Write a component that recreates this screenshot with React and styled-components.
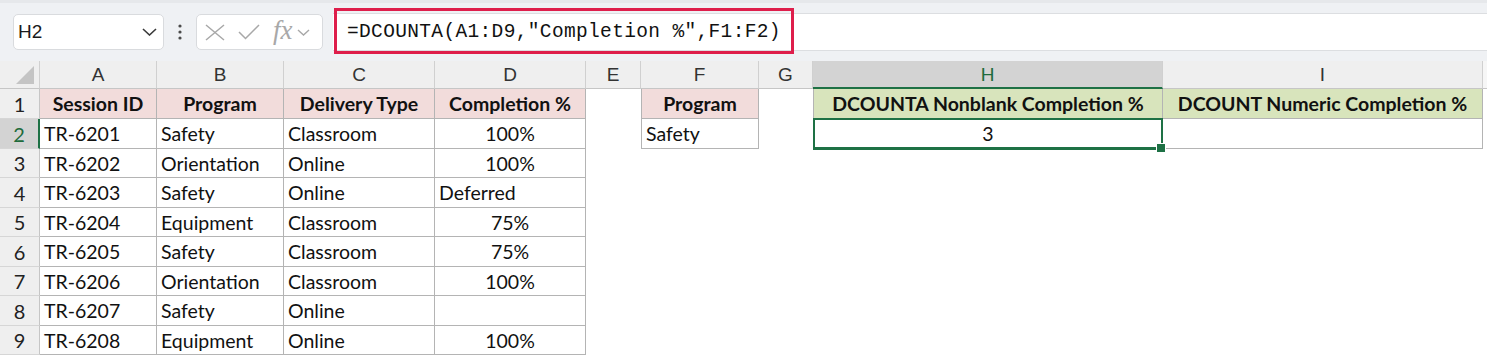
import styled, { createGlobalStyle } from "styled-components"

const GlobalStyle = createGlobalStyle`
  body {
    margin: 0;
    background: #ffffff;
    font-family: 'Lato', sans-serif;
    overflow: hidden;
  }
`

const COL_WIDTHS = [40, 117, 127, 151, 151, 55, 118, 54, 350, 320]
const ROW_HEIGHTS = [30, 30, 29, 30, 29, 30, 29, 30, 29]
const LETTERS = ["A", "B", "C", "D", "E", "F", "G", "H", "I"]

const PINK = "#f2dcdb"
const GREEN = "#d8e4bc"

// each row: cells for A..I, null = empty cell without border
const ROWS = [
  [
    { v: "Session ID", fill: PINK, bold: true, align: "center" },
    { v: "Program", fill: PINK, bold: true, align: "center" },
    { v: "Delivery Type", fill: PINK, bold: true, align: "center" },
    { v: "Completion %", fill: PINK, bold: true, align: "center" },
    null,
    { v: "Program", fill: PINK, bold: true, align: "center", left: true },
    null,
    { v: "DCOUNTA Nonblank Completion %", fill: GREEN, bold: true, align: "center", left: true },
    { v: "DCOUNT Numeric Completion %", fill: GREEN, bold: true, align: "center" },
  ],
  [
    { v: "TR-6201" }, { v: "Safety" }, { v: "Classroom" }, { v: "100%", align: "center" },
    null,
    { v: "Safety", left: true },
    null,
    { v: "3", align: "center", left: true, selected: true },
    { v: "" },
  ],
  [{ v: "TR-6202" }, { v: "Orientation" }, { v: "Online" }, { v: "100%", align: "center" }],
  [{ v: "TR-6203" }, { v: "Safety" }, { v: "Online" }, { v: "Deferred" }],
  [{ v: "TR-6204" }, { v: "Equipment" }, { v: "Classroom" }, { v: "75%", align: "center" }],
  [{ v: "TR-6205" }, { v: "Safety" }, { v: "Classroom" }, { v: "75%", align: "center" }],
  [{ v: "TR-6206" }, { v: "Orientation" }, { v: "Classroom" }, { v: "100%", align: "center" }],
  [{ v: "TR-6207" }, { v: "Safety" }, { v: "Online" }, { v: "" }],
  [{ v: "TR-6208" }, { v: "Equipment" }, { v: "Online" }, { v: "100%", align: "center" }],
]

export default function App() {
  return (
    <>
      <GlobalStyle />
      <Page>
        <Toolbar>
          <NameBox>
            <NameText>H2</NameText>
            <svg width="15" height="8" viewBox="0 0 15 8">
              <path d="M1 1 L7.5 7 L14 1" fill="none" stroke="#3a3a3a" strokeWidth="1.6" />
            </svg>
          </NameBox>
          <Dots width="4" height="16" viewBox="0 0 4 16">
            <circle cx="2" cy="2" r="1.6" fill="#4a4a4a" />
            <circle cx="2" cy="8" r="1.6" fill="#4a4a4a" />
            <circle cx="2" cy="14" r="1.6" fill="#4a4a4a" />
          </Dots>
          <FuncBox>
            <svg width="20" height="17" viewBox="0 0 20 17">
              <path d="M1 1 L19 16 M19 1 L1 16" stroke="#a8a8a8" strokeWidth="1.5" fill="none" />
            </svg>
            <svg width="22" height="16" viewBox="0 0 22 16">
              <path d="M1 8 L7.5 14.5 L21 1" stroke="#a8a8a8" strokeWidth="1.5" fill="none" />
            </svg>
            <FxLabel>fx</FxLabel>
            <svg width="13" height="7" viewBox="0 0 13 7">
              <path d="M1 1 L6.5 6 L12 1" fill="none" stroke="#a8a8a8" strokeWidth="1.4" />
            </svg>
          </FuncBox>
          <FormulaBar>
            <FormulaText>=DCOUNTA(A1:D9,"Completion %",F1:F2)</FormulaText>
            <Highlight />
          </FormulaBar>
        </Toolbar>

        <Sheet>
          <Corner>
            <svg width="20" height="20" viewBox="0 0 20 20">
              <polygon points="19,1 19,19 1,19" fill="#c4c4c4" />
            </svg>
          </Corner>
          {LETTERS.map((l) => (
            <ColHeader key={l} $active={l === "H"}>{l}</ColHeader>
          ))}
          <ColFiller />

          {ROWS.map((row, r) => (
            <Row key={r} row={row} index={r} />
          ))}
        </Sheet>
      </Page>
    </>
  )
}

function Row({ row, index }) {
  const cells = []
  for (let c = 0; c < 9; c++) {
    const cell = row[c]
    if (!cell) {
      cells.push(<Cell key={c} />)
      continue
    }
    cells.push(
      <Cell
        key={c}
        $border
        $left={cell.left}
        $fill={cell.fill}
        $bold={cell.bold}
        $align={cell.align}
      >
        {cell.v}
        {cell.selected && (
          <Selection>
            <Handle />
          </Selection>
        )}
      </Cell>
    )
  }
  return (
    <>
      <RowHeader $active={index === 1}>{index + 1}</RowHeader>
      {cells}
      <Cell />
    </>
  )
}

const Page = styled.div`
  width: 1487px;
  height: 357px;
  overflow: hidden;
  background: #ffffff;
`

const Toolbar = styled.div`
  height: 61px;
  box-sizing: border-box;
  background: #eff1f4;
  border-top: 3px solid #e6e8eb;
  display: flex;
  align-items: center;
  padding-left: 13px;
`

const NameBox = styled.div`
  width: 151px;
  height: 36px;
  box-sizing: border-box;
  background: #ffffff;
  border: 1px solid #d9dbde;
  border-radius: 5px;
  display: flex;
  align-items: center;
  justify-content: space-between;
  padding: 0 6px 0 4px;
`

const NameText = styled.span`
  font-family: 'Liberation Sans', sans-serif;
  font-size: 19px;
  color: #1a1a1a;
`

const Dots = styled.svg`
  margin: 0 14px 0 14px;
`

const FuncBox = styled.div`
  width: 127px;
  height: 36px;
  box-sizing: border-box;
  background: #ffffff;
  border: 1px solid #d9dbde;
  border-radius: 5px;
  display: flex;
  align-items: center;
  gap: 13px;
  padding-left: 8px;

  & > svg:last-child {
    margin-left: -9px;
  }
`

const FxLabel = styled.span`
  font-family: 'Liberation Serif', serif;
  font-style: italic;
  font-size: 27px;
  color: #a8a8a8;
  line-height: 1;
  margin-top: -3px;
`

const FormulaBar = styled.div`
  position: relative;
  flex: 1;
  height: 38px;
  margin-left: 10px;
  box-sizing: border-box;
  background: #ffffff;
  border-top: 1px solid #dcdee1;
  border-bottom: 1px solid #dcdee1;
  display: flex;
  align-items: center;
  padding-left: 14px;
`

const FormulaText = styled.span`
  font-family: 'Liberation Mono', monospace;
  font-size: 19.5px;
  letter-spacing: 0.35px;
  color: #111111;
  white-space: pre;
`

const Highlight = styled.div`
  position: absolute;
  left: 1px;
  top: -6px;
  width: 460px;
  height: 46px;
  box-sizing: border-box;
  border: 3px solid #de1e4b;
`

const Sheet = styled.div`
  display: grid;
  grid-template-columns: ${COL_WIDTHS.map((w) => w + "px").join(" ")} 1fr;
  grid-template-rows: 28px ${ROW_HEIGHTS.map((h) => h + "px").join(" ")};
`

const Corner = styled.div`
  background: #efefef;
  border-right: 1px solid #d0d0d0;
  border-bottom: 1px solid #c6c6c6;
  box-sizing: border-box;
  display: flex;
  align-items: flex-end;
  justify-content: flex-end;
  padding: 0 4px 3px 0;
`

const ColHeader = styled.div`
  box-sizing: border-box;
  background: ${(p) => (p.$active ? "#d3d3d3" : "#efefef")};
  color: ${(p) => (p.$active ? "#1e6b3c" : "#333333")};
  border-right: 1px solid #d0d0d0;
  border-bottom: ${(p) => (p.$active ? "2px solid #1e7145" : "1px solid #c6c6c6")};
  display: flex;
  align-items: center;
  justify-content: center;
  font-family: 'Liberation Sans', sans-serif;
  font-size: 19px;
  padding-top: ${(p) => (p.$active ? "1px" : "0")};
`

const ColFiller = styled.div`
  background: #f6f6f6;
  border-bottom: 1px solid #c6c6c6;
`

const RowHeader = styled.div`
  box-sizing: border-box;
  background: ${(p) => (p.$active ? "#d3d3d3" : "#efefef")};
  color: ${(p) => (p.$active ? "#1e6b3c" : "#222222")};
  border-right: ${(p) => (p.$active ? "2px solid #1e7145" : "1px solid #c6c6c6")};
  border-bottom: 1px solid #d6d6d6;
  display: flex;
  align-items: center;
  justify-content: center;
  font-family: 'Lato', sans-serif;
  font-size: 20px;
`

const Cell = styled.div`
  position: relative;
  box-sizing: border-box;
  background: ${(p) => p.$fill || "#ffffff"};
  border-right: ${(p) => (p.$border ? "1px solid #b4b4b4" : "none")};
  border-bottom: ${(p) => (p.$border ? "1px solid #b4b4b4" : "none")};
  border-left: ${(p) => (p.$left ? "1px solid #b4b4b4" : "none")};
  display: flex;
  align-items: center;
  justify-content: ${(p) => (p.$align === "center" ? "center" : "flex-start")};
  padding: 0 4px;
  font-family: 'Lato', sans-serif;
  font-size: 19.5px;
  font-weight: ${(p) => (p.$bold ? 700 : 400)};
  color: #111111;
  white-space: nowrap;
`

const Selection = styled.div`
  position: absolute;
  z-index: 3;
  left: -1px;
  top: -1px;
  right: -1px;
  bottom: -2px;
  border: 2px solid #1e7145;
  border-bottom-width: 3px;
  pointer-events: none;
`

const Handle = styled.div`
  position: absolute;
  right: -5px;
  bottom: -6px;
  width: 8px;
  height: 8px;
  background: #1e7145;
  border: 1px solid #ffffff;
`
